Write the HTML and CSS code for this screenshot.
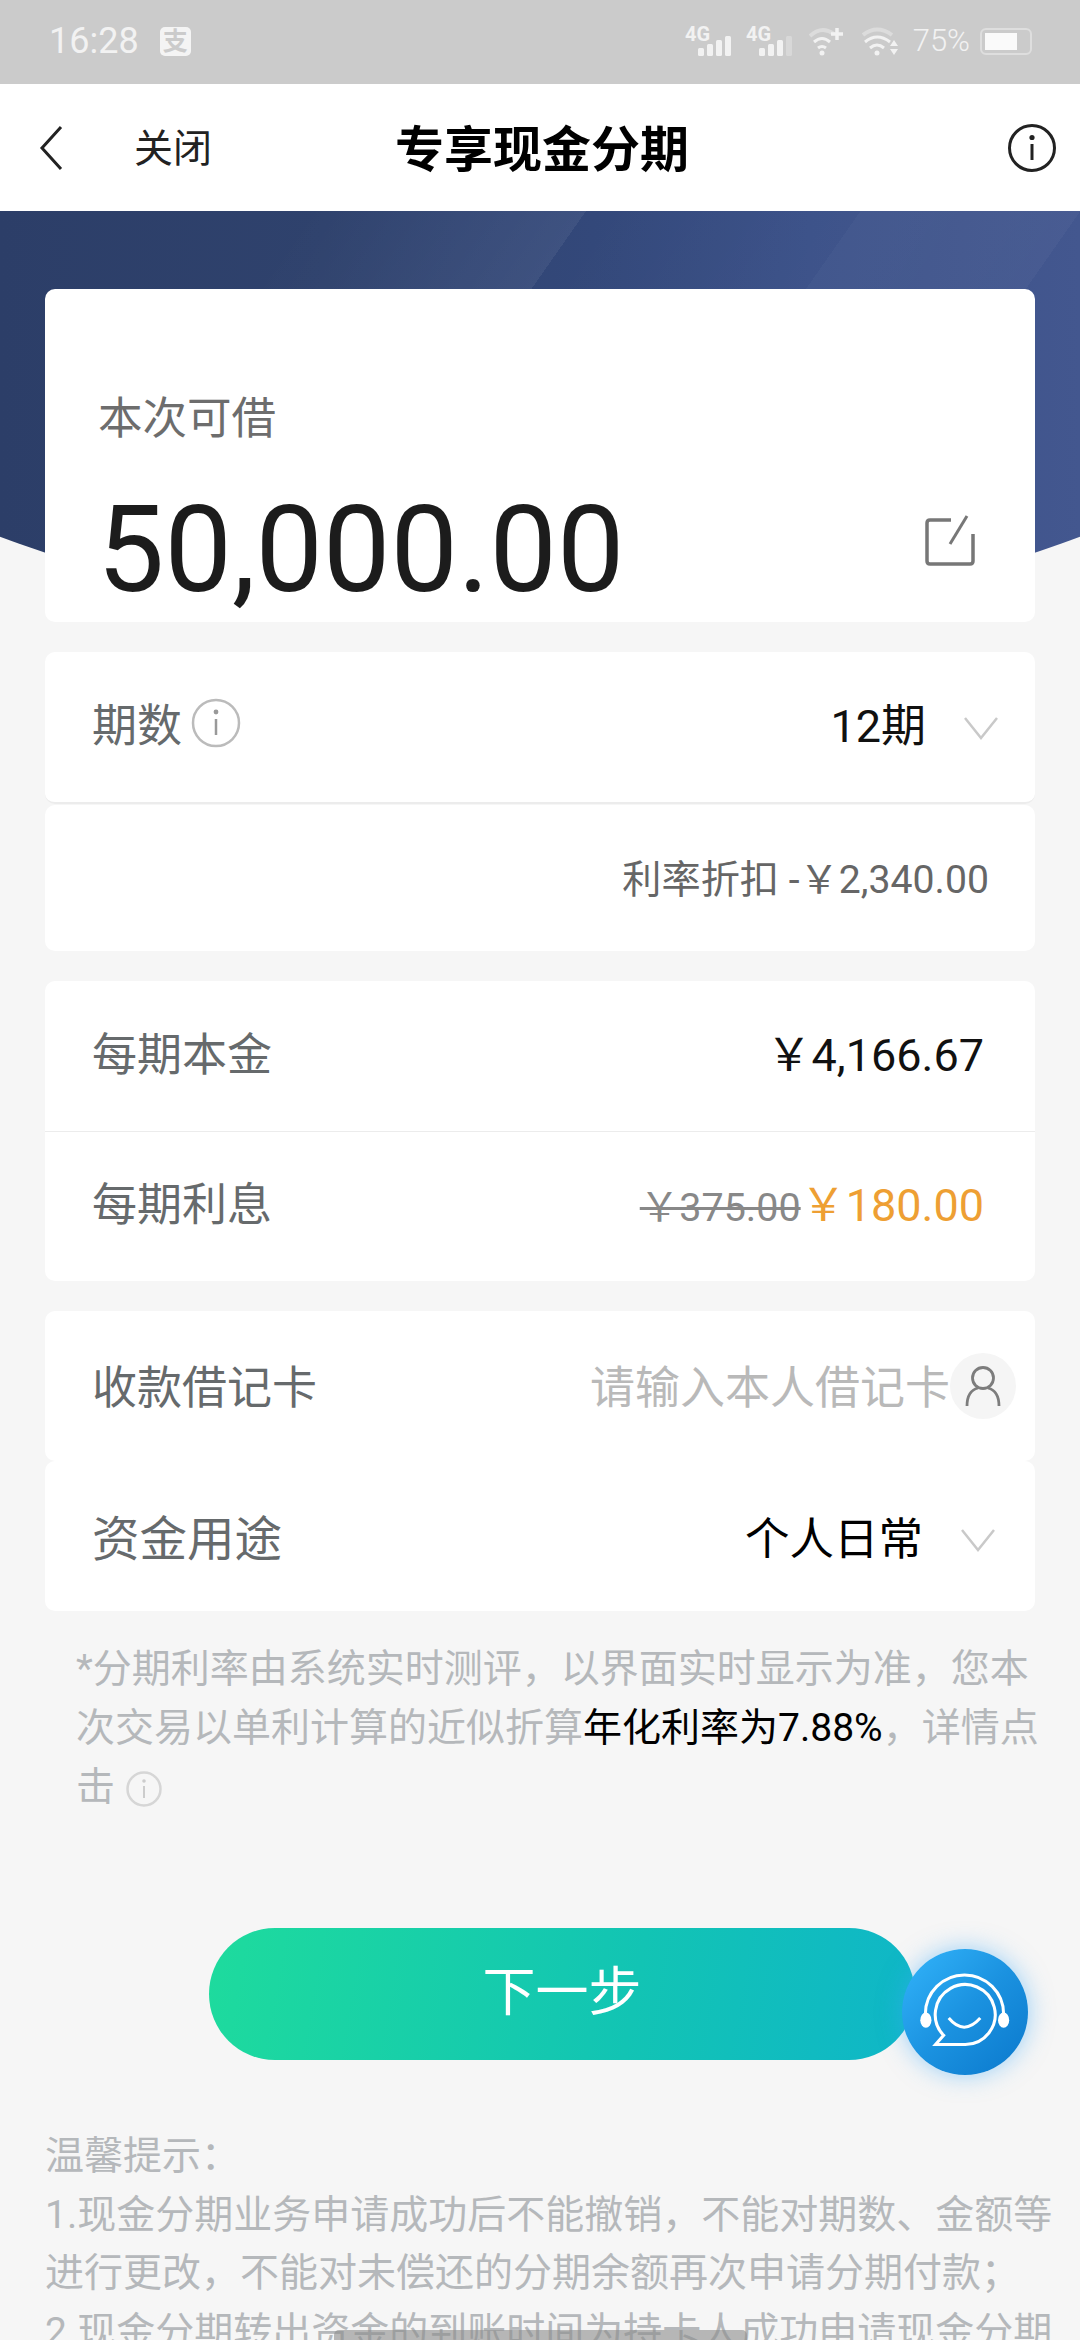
FILE: index.html
```html
<!DOCTYPE html>
<html>
<head>
  <title>专享现金分期</title>
  <meta charset="UTF-8">
  <link rel="stylesheet" href="styles.css">
</head>
<body>
  <div class="page">
    <div class="status-bar">
      <div class="status-left">
        <span class="clock">16:28</span>
        <span class="app-badge">支</span>
      </div>
      <div class="status-right">
        <svg class="sig" width="48" height="30" viewBox="0 0 48 30">
          <text x="0" y="15" class="sig-label">4G</text>
          <rect x="13" y="22" width="6" height="8" rx="1.5" fill="#f2f2f2"/>
          <rect x="22" y="18" width="6" height="12" rx="1.5" fill="#f2f2f2"/>
          <rect x="31" y="14" width="6" height="16" rx="1.5" fill="#f2f2f2"/>
          <rect x="40" y="10" width="6" height="20" rx="1.5" fill="#f2f2f2"/>
        </svg>
        <svg class="sig" width="48" height="30" viewBox="0 0 48 30">
          <text x="0" y="15" class="sig-label">4G</text>
          <rect x="13" y="22" width="6" height="8" rx="1.5" fill="#f2f2f2"/>
          <rect x="22" y="18" width="6" height="12" rx="1.5" fill="#f2f2f2"/>
          <rect x="31" y="14" width="6" height="16" rx="1.5" fill="#f2f2f2"/>
          <rect x="40" y="10" width="6" height="20" rx="1.5" fill="#d8d8d8"/>
        </svg>
        <svg class="wifi-a" width="36" height="30" viewBox="0 0 36 30" fill="none">
          <path d="M1 10 Q13 -1 25 8" stroke="#dcdcdc" stroke-width="4"/>
          <path d="M5 16 Q13 9 21 16" stroke="#f2f2f2" stroke-width="3"/>
          <path d="M9 22 Q13 19 17 22" stroke="#f2f2f2" stroke-width="3"/>
          <circle cx="13" cy="27" r="2.500" fill="#f2f2f2"/>
          <path d="M28 2 V14 M22 8 H34" stroke="#f2f2f2" stroke-width="3.500"/>
        </svg>
        <svg class="wifi-b" width="38" height="30" viewBox="0 0 38 30" fill="none">
          <path d="M1 9 Q15 -2 30 9" stroke="#dcdcdc" stroke-width="4"/>
          <path d="M3 16 Q15 6 28 16" stroke="#f2f2f2" stroke-width="3"/>
          <path d="M8 22 Q15 16 22 22" stroke="#f2f2f2" stroke-width="3"/>
          <circle cx="15" cy="27" r="2.500" fill="#f2f2f2"/>
          <path d="M32 14 L36 20 H28 Z M28 23 H36 L32 29 Z" fill="#f2f2f2"/>
        </svg>
        <span class="batt-pct">75%</span>
        <span class="battery"><span class="battery-fill"></span></span>
      </div>
    </div>

    <div class="nav-bar">
      <svg class="nav-back" width="26" height="46" viewBox="0 0 26 46" fill="none">
        <path d="M23 2 L4 23 L23 44" stroke="#222" stroke-width="3"/>
      </svg>
      <span class="nav-close">关闭</span>
      <span class="nav-title">专享现金分期</span>
      <svg class="nav-info" width="48" height="48" viewBox="0 0 48 48" fill="none">
        <circle cx="24" cy="24" r="22.500" stroke="#222" stroke-width="3"/>
        <circle cx="24" cy="13.500" r="2.600" fill="#222"/>
        <path d="M24 20 V36" stroke="#222" stroke-width="3"/>
      </svg>
    </div>

    <div class="hero"></div>

    <div class="card amount-card">
      <div class="amount-label">本次可借</div>
      <div class="amount-row">
        <span class="amount">50,000.00</span>
        <svg class="edit-icon" width="50" height="52" viewBox="0 0 50 52" fill="none">
          <path d="M26 6 H5 Q2 6 2 9 V47 Q2 50 5 50 H45 Q48 50 48 47 V20" stroke="#777" stroke-width="3.500"/>
          <path d="M25 30 L42 2" stroke="#777" stroke-width="3"/>
        </svg>
      </div>
    </div>

    <div class="card card-split">
      <div class="row row-term">
        <span class="row-label">期数
          <svg class="info-sm" width="50" height="50" viewBox="0 0 50 50" fill="none">
            <circle cx="25" cy="25" r="23" stroke="#bbb" stroke-width="2.500"/>
            <circle cx="25" cy="14" r="2.400" fill="#999"/>
            <path d="M25 21 V37" stroke="#999" stroke-width="2.500"/>
          </svg>
        </span>
        <span class="row-select">
          <span class="row-value">12期</span>
          <svg class="chev" width="36" height="26" viewBox="0 0 36 26" fill="none">
            <path d="M2 3 L18 23 L34 3" stroke="#c9c9c9" stroke-width="2.500"/>
          </svg>
        </span>
      </div>
    </div>
    <div class="card card-discount">
      <span class="discount">利率折扣 -￥2,340.00</span>
    </div>

    <div class="card card-gap">
      <div class="row row-money">
        <span class="row-label">每期本金</span>
        <span class="row-value">￥4,166.67</span>
      </div>
      <div class="row row-money row-line">
        <span class="row-label">每期利息</span>
        <span class="row-value"><s class="old-price">￥375.00</s><span class="new-price">￥180.00</span></span>
      </div>
    </div>

    <div class="card card-gap">
      <div class="row row-input">
        <span class="row-label">收款借记卡</span>
        <span class="card-input">
          <span class="placeholder">请输入本人借记卡</span>
          <span class="person">
            <svg width="36" height="41" viewBox="0 0 36 41" fill="none">
              <circle cx="18" cy="12" r="10.500" stroke="#7d7d7d" stroke-width="2.800"/>
              <path d="M2 40 Q2 25 13 22 M34 40 Q34 25 23 22" stroke="#7d7d7d" stroke-width="2.800"/>
            </svg>
          </span>
        </span>
      </div>
    </div>
    <div class="card card-purpose">
      <div class="row row-input">
        <span class="row-label label-big">资金用途</span>
        <span class="row-select">
          <span class="row-value">个人日常</span>
          <svg class="chev" width="36" height="26" viewBox="0 0 36 26" fill="none">
            <path d="M2 3 L18 23 L34 3" stroke="#c9c9c9" stroke-width="2.500"/>
          </svg>
        </span>
      </div>
    </div>

    <p class="note">*分期利率由系统实时测评，以界面实时显示为准，您本次交易以单利计算的近似折算<span class="note-em">年化利率为7.88%</span>，详情点击
      <svg class="note-info" width="36" height="36" viewBox="0 0 36 36" fill="none">
        <circle cx="18" cy="18" r="16.500" stroke="#d6d6d6" stroke-width="2.500"/>
        <circle cx="18" cy="10" r="1.800" fill="#ccc"/>
        <path d="M18 15 V27" stroke="#ccc" stroke-width="2"/>
      </svg>
    </p>

    <div class="action">
      <button class="next-btn">下一步</button>
      <div class="helper">
        <svg width="126" height="126" viewBox="0 0 124 124" fill="none">
          <path d="M23 68 V64 A38.500 38.500 0 0 1 100 64 V68" stroke="#fff" stroke-width="3"/>
          <ellipse cx="23.500" cy="70" rx="5.500" ry="7.500" fill="#fff"/>
          <ellipse cx="100" cy="70" rx="5.500" ry="7.500" fill="#fff"/>
          <path d="M62 94 H33 L41 85 A29.500 29.500 0 1 1 62 94 Z" stroke="#fff" stroke-width="3"/>
          <path d="M46 68 Q61 86 77 68" stroke="#fff" stroke-width="3"/>
        </svg>
      </div>
    </div>

    <div class="tips">
      <div>温馨提示：</div>
      <div>1.现金分期业务申请成功后不能撤销，不能对期数、金额等进行更改，不能对未偿还的分期余额再次申请分期付款；</div>
      <div>2.现金分期转出资金的到账时间为持卡人成功申请现金分期</div>
    </div>

    <div class="home-bar"></div>
  </div>
</body>
</html>
```

FILE: styles.css
```css
* {
  box-sizing: border-box;
}
html, body {
  margin: 0;
  padding: 0;
}
body {
  font-family: Roboto, "Noto Sans CJK SC", sans-serif;
  background-color: #f6f6f6;
}
.page {
  position: relative;
  width: 1080px;
  height: 2340px;
  overflow: hidden;
}

/* status bar */
.status-bar {
  height: 84px;
  background-color: #cbcbcb;
  display: flex;
  justify-content: space-between;
  align-items: center;
  padding: 0 48px 2px 49px;
  color: #f2f2f2;
}
.status-left {
  display: flex;
  align-items: center;
  gap: 21px;
}
.clock {
  font-size: 36px;
  line-height: 40px;
}
.app-badge {
  width: 31px;
  height: 29px;
  border-radius: 5px;
  background-color: #f4f4f4;
  color: #cbcbcb;
  font-size: 25px;
  font-weight: 700;
  line-height: 29px;
  text-align: center;
}
.status-right {
  display: flex;
  align-items: center;
  gap: 13px;
}
.sig {
  overflow: visible;
}
.sig-label {
  font-family: Roboto, sans-serif;
  font-size: 20px;
  font-weight: 700;
  fill: #f2f2f2;
}
.wifi-a {
  margin-left: 2px;
}
.wifi-b {
  margin-left: 4px;
}
.batt-pct {
  font-size: 31px;
  font-weight: 300;
  line-height: 36px;
}
.battery {
  width: 52px;
  height: 27px;
  border: 2px solid #dedede;
  border-radius: 6px;
  padding: 3px;
  display: block;
  margin-left: -3px;
}
.battery-fill {
  display: block;
  width: 32px;
  height: 100%;
  background-color: #fafafa;
}

/* nav */
.nav-bar {
  height: 127px;
  background-color: #fff;
  display: flex;
  align-items: center;
  padding: 0 24px 0 38px;
}
.nav-close {
  margin: 0 0 5px 70px;
  font-size: 39px;
  color: #222;
}
.nav-title {
  margin: 0 0 5px 183px;
  font-size: 49px;
  font-weight: 700;
  color: #000;
}
.nav-info {
  margin-left: auto;
}

/* hero band behind first card */
.hero {
  height: 345px;
  background:
    linear-gradient(125deg, rgba(255,255,255,0) 250px, rgba(255,255,255,0.06) 480px, rgba(255,255,255,0) 480px, rgba(255,255,255,0.02) 705px, rgba(255,255,255,0.045) 705px, rgba(255,255,255,0.03) 885px, rgba(255,255,255,0) 885px),
    linear-gradient(90deg, #2c3e68 0%, #2f426d 30%, #33487a 55%, #3a5088 75%, #43578f 100%);
  clip-path: circle(1548px at 50% -1125px);
}

/* cards */
.card {
  position: relative;
  width: 990px;
  margin: 0 auto;
  background-color: #fff;
  border-radius: 10px;
}
.amount-card {
  margin-top: -267px;
  height: 333px;
  padding: 97px 60px 0 48px;
}
.amount-label {
  font-size: 44.500px;
  line-height: 66px;
  color: #6d6d6d;
  margin-left: 5px;
}
.amount-row {
  display: flex;
  justify-content: space-between;
  align-items: center;
  margin-top: 28px;
}
.amount {
  font-size: 120px;
  line-height: 140px;
  color: #1c1c1c;
  margin-left: 4px;
}
.edit-icon {
  margin-bottom: 20px;
}
.card-split {
  margin-top: 30px;
  height: 152px;
  border-bottom: 2px solid #ececec;
}
.card-discount {
  height: 146px;
  margin-top: 1px;
  padding: 0 46px 4px 0;
  display: flex;
  justify-content: flex-end;
  align-items: center;
}
.discount {
  font-size: 39.200px;
  color: #666;
}
.card-gap {
  margin-top: 30px;
}
.card-purpose {
  margin-top: 0;
}

/* rows */
.row {
  display: flex;
  justify-content: space-between;
  align-items: center;
  padding: 0 51px 0 47px;
}
.row-term {
  height: 149px;
  padding: 0 36px 8px 47px;
}
.row-money {
  height: 150px;
  padding-bottom: 10px;
}
.row-line {
  border-top: 1px solid #ececec;
}
.row-input {
  height: 150px;
  padding-right: 19px;
  padding-bottom: 4px;
}
.row-label {
  font-size: 45px;
  color: #666a6c;
  display: flex;
  align-items: center;
  gap: 9px;
}
.label-big {
  font-size: 47.500px;
}
.row-value {
  font-size: 45px;
  color: #111;
}
.row-select {
  display: flex;
  align-items: center;
  gap: 37px;
}
.chev {
  margin-top: 10px;
}
.card-purpose .row-input {
  padding-right: 39px;
  padding-bottom: 2px;
}
.card-purpose .row-value {
  color: #000;
  font-size: 44.500px;
}
.old-price {
  font-size: 39.500px;
  color: #888;
}
.new-price {
  color: #ee9f33;
}
.card-input {
  display: flex;
  align-items: center;
}
.placeholder {
  font-size: 45px;
  color: #b9b9b9;
}
.person {
  width: 66px;
  height: 66px;
  margin-top: 4px;
  border-radius: 50%;
  background-color: #f5f5f5;
  display: flex;
  align-items: center;
  justify-content: center;
}

/* note */
.note {
  margin: 29px 0 0;
  padding: 0 20px 0 76px;
  font-size: 39px;
  line-height: 59px;
  color: #b5b8bb;
}
.note-em {
  color: #000;
}
.note-info {
  vertical-align: -7px;
  margin-left: 1px;
}

/* button */
.action {
  position: relative;
  margin-top: 111px;
  height: 132px;
  padding-left: 209px;
}
.next-btn {
  width: 706px;
  height: 132px;
  border: none;
  border-radius: 66px;
  background: linear-gradient(100deg, #1edb9d 0%, #12c4b4 60%, #0fb6c8 100%);
  color: #fff;
  font-family: inherit;
  font-size: 53px;
  padding: 0 0 12px;
}
.helper {
  position: absolute;
  left: 902px;
  top: 21px;
  width: 126px;
  height: 126px;
  border-radius: 50%;
  background: linear-gradient(135deg, #33b5fb 0%, #1b92e0 50%, #0a78cc 100%);
  box-shadow: 0 0 24px rgba(60, 170, 250, 0.5);
}
.helper svg {
  display: block;
}

/* tips */
.tips {
  margin-top: 67px;
  padding: 0 20px 0 45px;
  font-size: 39px;
  line-height: 58.500px;
  color: #b5b8bb;
}

/* home indicator over the content */
.home-bar {
  position: absolute;
  left: 334px;
  bottom: 0;
  width: 413px;
  height: 10px;
  border-radius: 5px 5px 0 0;
  background-color: rgba(140, 140, 140, 0.6);
}
```
